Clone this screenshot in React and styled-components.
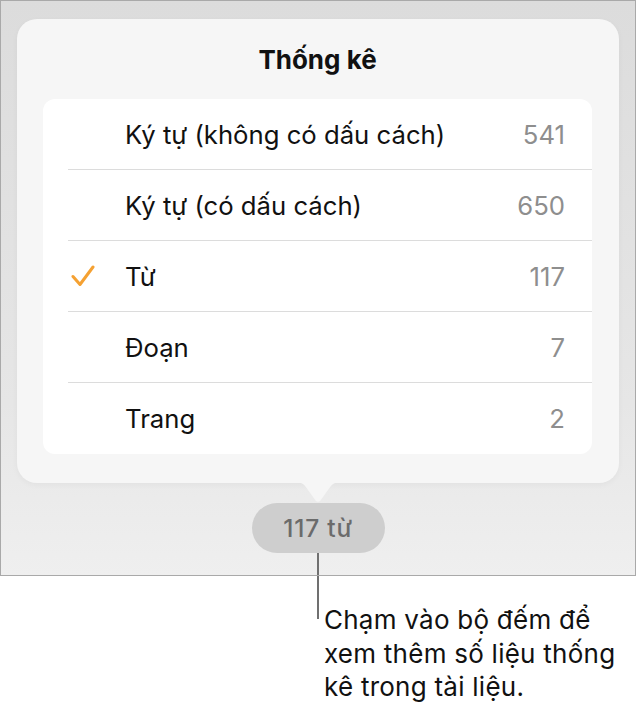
import React from "react";
import styled, { createGlobalStyle } from "styled-components";

const GlobalStyle = createGlobalStyle`
  html, body {
    margin: 0;
    padding: 0;
    background: #ffffff;
  }
  body {
    font-family: "Inter", "Roboto", "Noto Sans", sans-serif;
    -webkit-font-smoothing: antialiased;
  }
`;

const Page = styled.div`
  width: 638px;
  height: 716px;
`;

const Frame = styled.div`
  box-sizing: border-box;
  width: 636px;
  height: 576px;
  border: 1px solid #a9a9a9;
  background: linear-gradient(180deg, #dcdcdc 0%, #e6e6e6 70%, #efefef 100%);
  padding-top: 18px;
  display: flex;
  flex-direction: column;
  align-items: center;
`;

const Card = styled.div`
  box-sizing: border-box;
  width: 602px;
  height: 464px;
  background: #f6f6f6;
  border-radius: 20px;
  padding: 0 27px 29px 26px;
  display: flex;
  flex-direction: column;
  box-shadow: 0 2px 6px rgba(0, 0, 0, 0.04);
`;

const Title = styled.div`
  height: 80px;
  display: flex;
  align-items: center;
  justify-content: center;
  font-size: 26px;
  font-weight: 700;
  color: #111111;
`;

const List = styled.div`
  background: #ffffff;
  border-radius: 12px;
  padding-left: 25px;
`;

const Row = styled.div`
  height: 71px;
  box-sizing: border-box;
  display: flex;
  align-items: center;
  padding-right: 27px;
  border-bottom: ${(p) => (p.$last ? "none" : "1px solid #dcdcdc")};
`;

const CheckSlot = styled.div`
  width: 57px;
  display: flex;
  align-items: center;
  padding-left: 3px;
  box-sizing: border-box;
`;

const Label = styled.div`
  flex: 1;
  font-size: 25.7px;
  color: #111111;
`;

const Value = styled.div`
  font-size: 25.7px;
  color: #8e8e8e;
`;

const Tail = styled.svg`
  display: block;
  margin-top: -1px;
`;

const Pill = styled.div`
  width: 133px;
  height: 50px;
  border-radius: 25px;
  background: #cecece;
  display: flex;
  align-items: center;
  justify-content: center;
  font-size: 24.5px;
  font-weight: 500;
  letter-spacing: 0.8px;
  color: #6b6b6b;
`;

const Stem = styled.div`
  width: 2px;
  background: #707070;
  flex: ${(p) => (p.$grow ? 1 : "none")};
  height: ${(p) => (p.$h ? `${p.$h}px` : "auto")};
`;

const Callout = styled.div`
  display: flex;
  padding-left: 317px;
`;

const Note = styled.div`
  margin-left: 5px;
  margin-top: 27px;
  font-size: 26px;
  letter-spacing: 0.25px;
  line-height: 33.5px;
  color: #111111;
  width: 312px;
`;

const rows = [
  { label: "Ký tự (không có dấu cách)", value: "541" },
  { label: "Ký tự (có dấu cách)", value: "650" },
  { label: "Từ", value: "117", checked: true },
  { label: "Đoạn", value: "7" },
  { label: "Trang", value: "2" },
];

const Check = () => (
  <svg width="24" height="22" viewBox="0 0 24 22">
    <path
      d="M2 11.5 L9 19.5 L22 2"
      fill="none"
      stroke="#f5a132"
      strokeWidth="3"
      strokeLinecap="round"
      strokeLinejoin="round"
    />
  </svg>
);

export default function App() {
  return (
    <Page>
      <GlobalStyle />
      <Frame>
        <Card>
          <Title>Thống kê</Title>
          <List>
            {rows.map((r, i) => (
              <Row key={r.label} $last={i === rows.length - 1}>
                <CheckSlot>{r.checked ? <Check /> : null}</CheckSlot>
                <Label>{r.label}</Label>
                <Value>{r.value}</Value>
              </Row>
            ))}
          </List>
        </Card>
        <Tail width="48" height="21" viewBox="0 0 48 21">
          <path
            d="M0 0 C8 0 10 2 14 8 L21.5 18.5 Q24 21 26.5 18.5 L34 8 C38 2 40 0 48 0 Z"
            fill="#f6f6f6"
          />
        </Tail>
        <Pill>117 từ</Pill>
        <Stem $grow />
      </Frame>
      <Callout>
        <Stem $h={43} />
        <Note>Chạm vào bộ đếm để xem thêm số liệu thống kê trong tài liệu.</Note>
      </Callout>
    </Page>
  );
}
